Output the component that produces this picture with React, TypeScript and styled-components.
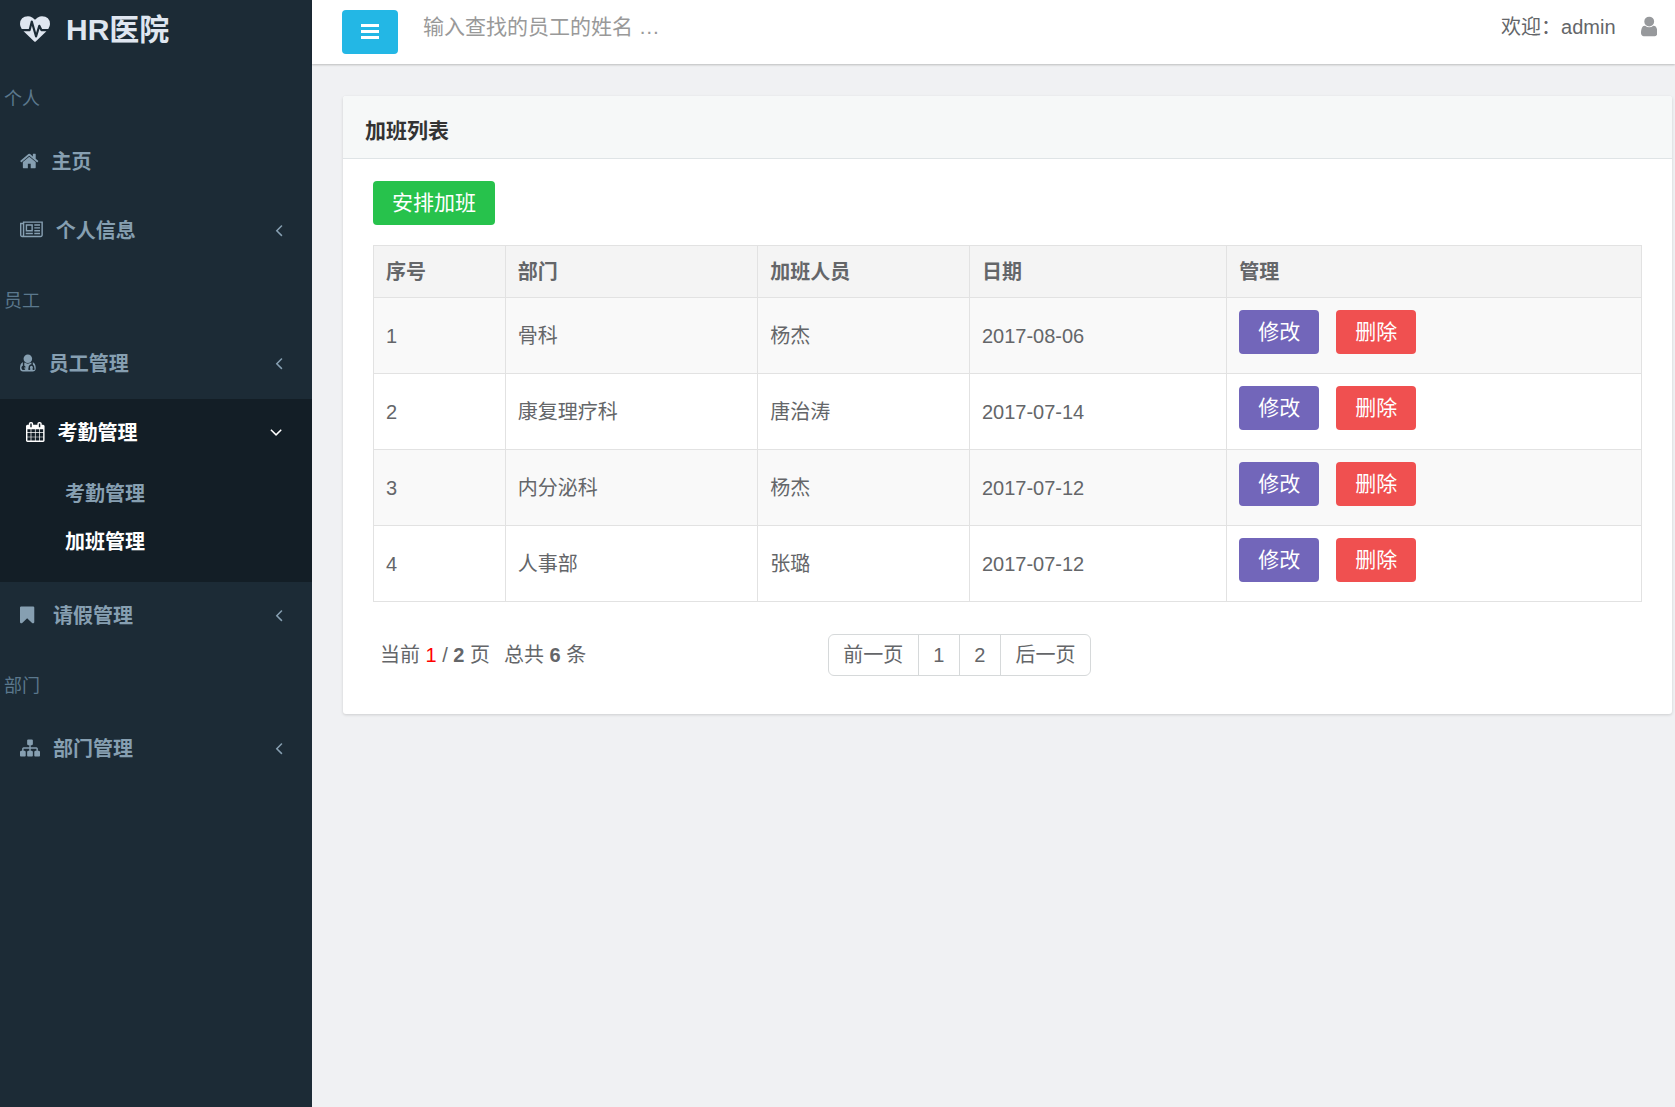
import React from "react";
import styled, { createGlobalStyle, css } from "styled-components";

const GlobalStyle = createGlobalStyle`
  *, *::before, *::after { box-sizing: border-box; }
  body {
    margin: 0;
    background: #f0f1f3;
    color: #646669;
    font-family: "Liberation Sans", "Noto Sans CJK SC", sans-serif;
    font-size: 20px;
    line-height: 28px;
  }
  button, input { font-family: inherit; }
  a { color: inherit; text-decoration: none; }
`;

/* ---------- icons ---------- */

type IconShape = { viewBox: string; d: string };

const icons = {
  heartbeat: {
    viewBox: "0 0 1792 1792",
    d: "M1280 1024h305q-5 6-10 10.5t-9 7.5l-3 4-623 600q-18 18-44 18t-44-18l-624-602q-5-2-21-20h369q22 0 39.5-13.5t22.5-34.5l70-281 190 667q6 20 23 33t39 13q21 0 38-13t23-33l146-485 56 112q18 35 57 35zm512-428q0 145-103 300h-369l-111-221q-8-17-25.5-27t-36.5-8q-45 5-56 46l-129 430-196-686q-6-20-23.5-33t-39.5-12-39 13.5-22 34.5l-116 464h-423q-103-155-103-300 0-220 127-344t351-124q62 0 126.5 21.5t120 58 95.5 68.5 76 68q36-36 76-68t95.5-68.5 120-58 126.5-21.5q224 0 351 124t127 344z",
  },
  home: {
    viewBox: "64 0 1664 1792",
    d: "M1472 992v480q0 26-19 45t-45 19h-384v-384h-256v384h-384q-26 0-45-19t-19-45v-480q0-1 .5-3t.5-3l575-474 575 474q1 2 1 6zm223-69l-62 74q-8 9-21 11h-3q-13 0-21-7l-692-577-692 577q-12 8-24 7-13-2-21-11l-62-74q-8-10-7-23.5t11-21.5l719-599q32-26 76-26t76 26l244 204v-195q0-14 9-23t23-9h192q14 0 23 9t9 23v408l219 182q10 8 11 21.5t-7 23.5z",
  },
  newspaper: {
    viewBox: "0 0 2048 1792",
    d: "M1024 512h-384v384h384v-384zm128 640v128h-640v-128h640zm0-768v640h-640v-640h640zm640 768v128h-512v-128h512zm0-256v128h-512v-128h512zm0-256v128h-512v-128h512zm0-256v128h-512v-128h512zm-1536 960v-960h-128v960q0 26 19 45t45 19 45-19 19-45zm1664 0v-1088h-1536v1088q0 33-11 64h1483q26 0 45-19t19-45zm128-1216v1216q0 80-56 136t-136 56h-1664q-80 0-136-56t-56-136v-1088h256v-128h1792z",
  },
  doctor: {
    viewBox: "192 0 1408 1792",
    d: "M704 1344q0 26-19 45t-45 19-45-19-19-45 19-45 45-19 45 19 19 45zm896 49q0 121-73 190t-194 69h-874q-121 0-194-69t-73-190q0-68 5.5-131t24-138 47.5-132.5 81-103 120-60.5q-22 52-22 120v203q-58 20-93 70t-35 111q0 80 56 136t136 56 136-56 56-136q0-61-35.5-111t-92.5-70v-203q0-62 25-93 132 104 295 104t295-104q25 31 25 93v64q-106 0-181 75t-75 181v89q-32 29-32 71 0 40 28 68t68 28 68-28 28-68q0-42-32-71v-89q0-52 38-90t90-38 90 38 38 90v89q-32 29-32 71 0 40 28 68t68 28 68-28 28-68q0-42-32-71v-89q0-68-34.5-127.5t-93.5-93.5q0-10 .5-42.5t0-48-2.5-41.5-7-47-13-40q68 15 120 60.5t81 103 47.5 132.5 24 138 5.5 131zm-320-881q0 159-112.5 271.5t-271.5 112.5-271.5-112.5-112.5-271.5 112.5-271.5 271.5-112.5 271.5 112.5 112.5 271.5z",
  },
  calendar: {
    viewBox: "64 0 1664 1792",
    d: "M192 1664h288v-288h-288v288zm352 0h320v-288h-320v288zm-352-352h288v-320h-288v320zm352 0h320v-320h-320v320zm-352-384h288v-288h-288v288zm736 736h320v-288h-320v288zm-384-736h320v-288h-320v288zm768 736h288v-288h-288v288zm-384-352h320v-320h-320v320zm-352-864v-288q0-13-9.5-22.5t-22.5-9.5h-64q-13 0-22.5 9.5t-9.5 22.5v288q0 13 9.5 22.5t22.5 9.5h64q13 0 22.5-9.5t9.5-22.5zm736 864h288v-320h-288v320zm-384-384h320v-288h-320v288zm384 0h288v-288h-288v288zm32-480v-288q0-13-9.5-22.5t-22.5-9.5h-64q-13 0-22.5 9.5t-9.5 22.5v288q0 13 9.5 22.5t22.5 9.5h64q13 0 22.5-9.5t9.5-22.5zm384-64v1280q0 52-38 90t-90 38h-1408q-52 0-90-38t-38-90v-1280q0-52 38-90t90-38h128v-96q0-66 47-113t113-47h64q66 0 113 47t47 113v96h384v-96q0-66 47-113t113-47h64q66 0 113 47t47 113v96h128q52 0 90 38t38 90z",
  },
  bookmark: {
    viewBox: "256 0 1792 1792",
    d: "M1420 128q23 0 44 9 33 13 52.5 41t19.5 62v1289q0 34-19.5 62t-52.5 41q-19 8-44 8-48 0-83-32l-441-424-441 424q-36 33-83 33-23 0-44-9-33-13-52.5-41t-19.5-62v-1289q0-34 19.5-62t52.5-41q21-9 44-9h1048z",
  },
  sitemap: {
    viewBox: "0 0 1792 1792",
    d: "M1792 1248v320q0 40-28 68t-68 28h-320q-40 0-68-28t-28-68v-320q0-40 28-68t68-28h96v-192h-512v192h96q40 0 68 28t28 68v320q0 40-28 68t-68 28h-320q-40 0-68-28t-28-68v-320q0-40 28-68t68-28h96v-192h-512v192h96q40 0 68 28t28 68v320q0 40-28 68t-68 28h-320q-40 0-68-28t-28-68v-320q0-40 28-68t68-28h96v-192q0-52 38-90t90-38h512v-192h-96q-40 0-68-28t-28-68v-320q0-40 28-68t68-28h320q40 0 68 28t28 68v320q0 40-28 68t-68 28h-96v192h512q52 0 90 38t38 90v192h96q40 0 68 28t28 68z",
  },
  user: {
    viewBox: "256 0 1280 1792",
    d: "M1536 1399q0 109-62.5 187t-150.5 78h-854q-88 0-150.5-78t-62.5-187q0-85 8.5-160.5t31.5-152 58.5-131 94-89 134.5-34.5q131 128 313 128t313-128q76 0 134.5 34.5t94 89 58.5 131 31.5 152 8.5 160.5zm-256-887q0 159-112.5 271.5t-271.5 112.5-271.5-112.5-112.5-271.5 112.5-271.5 271.5-112.5 271.5 112.5 112.5 271.5z",
  },
  bars: {
    viewBox: "0 0 18 15",
    d: "M0 0h18v3h-18zM0 6h18v3h-18zM0 12h18v3h-18z",
  },
  angleLeft: {
    viewBox: "544 0 704 1792",
    d: "M1203 544q0 13-10 23l-393 393 393 393q10 10 10 23t-10 23l-50 50q-10 10-23 10t-23-10l-466-466q-10-10-10-23t10-23l466-466q10-10 23-10t23 10l50 50q10 10 10 23z",
  },
  angleDown: {
    viewBox: "352 0 1088 1792",
    d: "M1395 736q0 13-10 23l-466 466q-10 10-23 10t-23-10l-466-466q-10-10-10-23t10-23l50-50q10-10 23-10t23 10l393 393 393-393q10-10 23-10t23 10l50 50q10 10 10 23z",
  },
} satisfies Record<string, IconShape>;

type IconName = keyof typeof icons;

const Glyph = styled.svg<{ $size: number }>`
  display: block;
  flex: none;
  height: ${(p) => p.$size}px;
  margin-bottom: 2px;
  fill: currentColor;
`;

const Icon = ({ name, size = 20 }: { name: IconName; size?: number }) => (
  <Glyph viewBox={icons[name].viewBox} $size={size} aria-hidden="true">
    <path d={icons[name].d} />
  </Glyph>
);

/* ---------- shell ---------- */

const Shell = styled.div`
  display: grid;
  grid-template-columns: 312px minmax(0, 1fr);
  min-height: 100vh;
`;

const Sidebar = styled.aside`
  background: #1c2b36;
  color: #869fb1;
`;

const Brand = styled.a`
  display: flex;
  align-items: center;
  gap: 16px;
  height: 64px;
  padding: 0 20px 5px;
  color: #dfe6f0;
  font-size: 30px;
  font-weight: 700;
  line-height: 40px;
`;

const SectionLabel = styled.h2`
  display: flex;
  align-items: center;
  height: 64px;
  margin: 0;
  padding: 6px 4px 0;
  color: #5b788d;
  font-size: 18px;
  font-weight: 400;
`;

const MenuList = styled.ul`
  margin: 0;
  padding: 0;
  list-style: none;
`;

const MenuEntry = styled.li<{ $open?: boolean }>`
  ${(p) =>
    p.$open &&
    css`
      background: #131e26;
      color: #fff;
    `}
`;

const MenuLink = styled.a<{ $open?: boolean }>`
  display: flex;
  align-items: center;
  gap: 13px;
  height: 69px;
  padding: ${(p) => (p.$open ? "0 30px 2px 26px" : "0 29px 2px 20px")};
  font-weight: 700;
`;

const MenuText = styled.span`
  flex: 1;
`;

const SubMenu = styled.ul`
  margin: 0;
  padding: 2px 0 16px;
  list-style: none;
`;

const SubLink = styled.a<{ $active?: boolean }>`
  display: flex;
  align-items: center;
  height: 48px;
  padding-left: 65px;
  color: ${(p) => (p.$active ? "#fff" : "#869fb1")};
  font-weight: 700;
`;

const Main = styled.div`
  display: flex;
  flex-direction: column;
  min-width: 0;
`;

const TopBar = styled.header`
  display: flex;
  align-items: flex-start;
  height: 64px;
  padding: 10px 18px 0 30px;
  background: #fff;
  box-shadow: 0 1px 2px rgba(0, 0, 0, 0.22);
`;

const Button = styled.button<{ $color: string }>`
  display: inline-flex;
  align-items: center;
  justify-content: center;
  height: 44px;
  padding: 0 19px;
  border: 0;
  border-radius: 4px;
  background: ${(p) => p.$color};
  color: #fff;
  font-size: 21px;
  line-height: 28px;
  cursor: pointer;
`;

const Search = styled.input`
  flex: 1;
  min-width: 0;
  height: 34px;
  margin-left: 25px;
  padding: 0;
  border: 0;
  outline: 0;
  background: none;
  color: #555;
  font-size: 21px;
  &::placeholder {
    color: #999;
    opacity: 1;
  }
`;

const Account = styled.div`
  display: flex;
  align-items: center;
  gap: 25px;
  height: 34px;
`;

const AccountIcon = styled.a`
  color: #97999c;
`;

const Content = styled.main`
  padding: 32px 3px 32px 31px;
`;

/* ---------- panel ---------- */

const Panel = styled.section`
  border-radius: 3px;
  background: #fff;
  box-shadow: 0 1px 3px rgba(0, 0, 0, 0.15);
`;

const PanelHeader = styled.header`
  padding: 21px 22px 13px;
  border-bottom: 1px solid #dfe4e6;
  border-radius: 3px 3px 0 0;
  background: #f6f8f8;
`;

const PanelTitle = styled.h1`
  margin: 0;
  color: #333;
  font-size: 21px;
  font-weight: 700;
  line-height: 28px;
`;

const PanelBody = styled.div`
  padding: 22px 30px 38px;
`;

const Table = styled.table`
  width: 100%;
  margin-top: 20px;
  border-collapse: collapse;
  table-layout: fixed;
`;

const Column = styled.col<{ $width?: string }>`
  width: ${(p) => p.$width ?? "auto"};
`;

const HeadCell = styled.th`
  padding: 12px 12px 11px;
  border: 1px solid #e2e2e2;
  background: #f4f4f4;
  text-align: left;
`;

const Row = styled.tr`
  &:nth-child(odd) {
    background: #f9f9f9;
  }
`;

const Cell = styled.td`
  padding: 12px;
  border: 1px solid #e2e2e2;
`;

const ActionCell = styled(Cell)`
  padding-bottom: 19px;
`;

const Actions = styled.div`
  display: flex;
  gap: 17px;
`;

const TableFooter = styled.footer`
  display: grid;
  grid-template-columns: 5fr 9fr;
  align-items: center;
  padding: 32px 7px 0;
`;

const Summary = styled.p`
  display: flex;
  gap: 14px;
  margin: 0;
`;

const CurrentPage = styled.span`
  color: #f00;
`;

const Pager = styled.ul`
  display: flex;
  justify-self: start;
  margin: 0;
  padding: 0;
  overflow: hidden;
  border: 1px solid #d6d9da;
  border-radius: 6px;
  list-style: none;
`;

const PagerItem = styled.li`
  & + & {
    border-left: 1px solid #d6d9da;
  }
`;

const PagerLink = styled.a`
  display: block;
  padding: 6px 15px 6px 14px;
`;

/* ---------- data ---------- */

type MenuItem = { icon: IconName; text: string; plain?: boolean; children?: string[] };

const menu: { label: string; items: MenuItem[] }[] = [
  {
    label: "个人",
    items: [
      { icon: "home", text: "主页", plain: true },
      { icon: "newspaper", text: "个人信息" },
    ],
  },
  {
    label: "员工",
    items: [
      { icon: "doctor", text: "员工管理" },
      { icon: "calendar", text: "考勤管理", children: ["考勤管理", "加班管理"] },
      { icon: "bookmark", text: "请假管理" },
    ],
  },
  { label: "部门", items: [{ icon: "sitemap", text: "部门管理" }] },
];

const overtime = [
  { id: 1, department: "骨科", person: "杨杰", date: "2017-08-06" },
  { id: 2, department: "康复理疗科", person: "唐治涛", date: "2017-07-14" },
  { id: 3, department: "内分泌科", person: "杨杰", date: "2017-07-12" },
  { id: 4, department: "人事部", person: "张璐", date: "2017-07-12" },
];

const columns = [
  { title: "序号", width: "10.4%" },
  { title: "部门", width: "19.9%" },
  { title: "加班人员", width: "16.7%" },
  { title: "日期", width: "20.3%" },
  { title: "管理" },
];

const activeSubItem = "加班管理";

/* ---------- page ---------- */

const SideMenuItem = ({ item }: { item: MenuItem }) => {
  const open = Boolean(item.children);
  return (
    <MenuEntry $open={open}>
      <MenuLink href="#" $open={open}>
        <Icon name={item.icon} />
        <MenuText>{item.text}</MenuText>
        {!item.plain && <Icon name={open ? "angleDown" : "angleLeft"} />}
      </MenuLink>
      {item.children && (
        <SubMenu>
          {item.children.map((text) => (
            <li key={text}>
              <SubLink href="#" $active={text === activeSubItem}>
                {text}
              </SubLink>
            </li>
          ))}
        </SubMenu>
      )}
    </MenuEntry>
  );
};

export default function App() {
  return (
    <>
      <GlobalStyle />
      <Shell>
        <Sidebar>
          <Brand href="#">
            <Icon name="heartbeat" size={30} />
            HR医院
          </Brand>
          <nav>
            {menu.map((section) => (
              <React.Fragment key={section.label}>
                <SectionLabel>{section.label}</SectionLabel>
                <MenuList>
                  {section.items.map((item) => (
                    <SideMenuItem key={item.text} item={item} />
                  ))}
                </MenuList>
              </React.Fragment>
            ))}
          </nav>
        </Sidebar>
        <Main>
          <TopBar>
            <Button type="button" $color="#23b7e5" aria-label="菜单">
              <Icon name="bars" size={15} />
            </Button>
            <Search type="text" placeholder="输入查找的员工的姓名 …" aria-label="输入查找的员工的姓名" />
            <Account>
              <span>欢迎：admin</span>
              <AccountIcon href="#" aria-label="admin">
                <Icon name="user" size={23} />
              </AccountIcon>
            </Account>
          </TopBar>
          <Content>
            <Panel>
              <PanelHeader>
                <PanelTitle>加班列表</PanelTitle>
              </PanelHeader>
              <PanelBody>
                <Button type="button" $color="#27c24c">
                  安排加班
                </Button>
                <Table>
                  <colgroup>
                    {columns.map((column) => (
                      <Column key={column.title} $width={column.width} />
                    ))}
                  </colgroup>
                  <thead>
                    <tr>
                      {columns.map((column) => (
                        <HeadCell key={column.title} scope="col">
                          {column.title}
                        </HeadCell>
                      ))}
                    </tr>
                  </thead>
                  <tbody>
                    {overtime.map((row) => (
                      <Row key={row.id}>
                        <Cell>{row.id}</Cell>
                        <Cell>{row.department}</Cell>
                        <Cell>{row.person}</Cell>
                        <Cell>{row.date}</Cell>
                        <ActionCell>
                          <Actions>
                            <Button type="button" $color="#7266ba">
                              修改
                            </Button>
                            <Button type="button" $color="#f05050">
                              删除
                            </Button>
                          </Actions>
                        </ActionCell>
                      </Row>
                    ))}
                  </tbody>
                </Table>
                <TableFooter>
                  <Summary>
                    <span>
                      当前 <CurrentPage>1</CurrentPage> / <b>2</b> 页
                    </span>
                    <span>
                      总共 <b>6</b> 条
                    </span>
                  </Summary>
                  <Pager>
                    {["前一页", "1", "2", "后一页"].map((text) => (
                      <PagerItem key={text}>
                        <PagerLink href="#">{text}</PagerLink>
                      </PagerItem>
                    ))}
                  </Pager>
                </TableFooter>
              </PanelBody>
            </Panel>
          </Content>
        </Main>
      </Shell>
    </>
  );
}
